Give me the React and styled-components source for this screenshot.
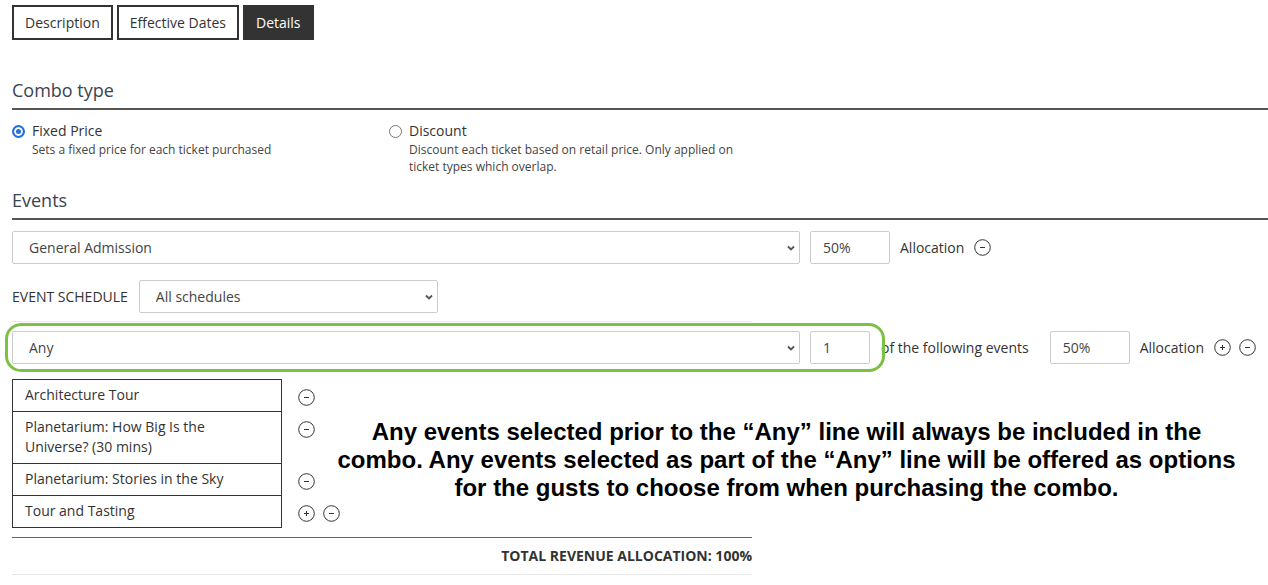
import React from 'react'
import styled, { createGlobalStyle } from 'styled-components'

const GlobalStyle = createGlobalStyle`
  body {
    margin: 0;
    background: #fff;
    color: #333;
    font-family: "Open Sans", "Noto Sans", sans-serif;
  }
`

const Page = styled.main`
  padding: 5px 0 0 12px;
`

const Tabs = styled.nav`
  display: flex;
  gap: 4px;
`

const Tab = styled.button`
  height: 35px;
  box-sizing: border-box;
  padding: 0 11px;
  border: 2px solid #333;
  border-radius: 0;
  background: ${(p) => (p.$active ? '#333' : '#fff')};
  color: ${(p) => (p.$active ? '#fff' : '#333')};
  font-family: inherit;
  font-size: 14px;
`

const SectionTitle = styled.h2`
  margin: ${(p) => p.$top}px 0 0;
  padding-bottom: 6px;
  border-bottom: 2px solid #555;
  font-size: 18px;
  line-height: 24px;
  font-weight: 400;
  color: #3b4350;
`

const RadioGroup = styled.div`
  display: grid;
  grid-template-columns: 377px 345px;
  margin-top: 11px;
`

const Option = styled.label`
  display: flex;
  gap: 7px;
  align-items: flex-start;
`

const Radio = styled.span`
  flex: 0 0 auto;
  box-sizing: border-box;
  width: 13px;
  height: 13px;
  margin-top: 4px;
  border-radius: 50%;
  border: ${(p) => (p.$checked ? '2px solid #1f6fe5' : '1px solid #777')};
  background: ${(p) => (p.$checked ? '#1f6fe5' : '#fff')};
  box-shadow: ${(p) => (p.$checked ? 'inset 0 0 0 2px #fff' : 'none')};
`

const OptionLabel = styled.div`
  font-size: 14px;
  line-height: 20px;
  color: #333;
`

const OptionDesc = styled.div`
  font-size: 12px;
  line-height: 17px;
  color: #444;
`

const Row = styled.div`
  display: flex;
  align-items: center;
  gap: 10px;
  margin-top: ${(p) => p.$top}px;
`

const SelectWrap = styled.div`
  position: relative;
  width: ${(p) => p.$width}px;
  flex: 0 0 auto;
`

const NativeSelect = styled.select`
  appearance: none;
  width: 100%;
  height: 33px;
  box-sizing: border-box;
  padding: 0 30px 0 16px;
  border: 1px solid #ccc;
  border-radius: 2px;
  background: #fff;
  color: #444;
  font-family: inherit;
  font-size: 14px;
`

const Chevron = styled.svg`
  position: absolute;
  right: 4px;
  top: 50%;
  transform: translateY(-50%);
  pointer-events: none;
`

const TextInput = styled.input`
  width: ${(p) => p.$width}px;
  height: 33px;
  box-sizing: border-box;
  padding: 0 12px;
  margin-left: ${(p) => p.$gap || 0}px;
  border: 1px solid #ccc;
  border-radius: 2px;
  color: #444;
  font-family: inherit;
  font-size: 14px;
  flex: 0 0 auto;
`

const Text = styled.span`
  font-size: 14px;
  color: #333;
  margin-left: ${(p) => p.$gap || 0}px;
`

const FieldLabel = styled.span`
  font-size: 14px;
  color: #333;
  text-transform: uppercase;
  margin-right: 1px;
`

const IconGroup = styled.span`
  display: inline-flex;
  gap: 8px;
  margin-left: ${(p) => p.$gap || 0}px;
`

const Divider = styled.hr`
  width: 740px;
  margin: 8px 0 0;
  border: 0;
  border-top: 1px solid #e8e8e8;
`

const Highlight = styled.div`
  position: relative;
  display: flex;
  gap: 10px;
  &::before {
    content: '';
    position: absolute;
    inset: -8px -15px -8px -7px;
    border: 3px solid #7cc144;
    border-radius: 16px;
    pointer-events: none;
  }
`

const ListArea = styled.div`
  display: flex;
  align-items: flex-start;
  margin-top: 15px;
`

const TableGroup = styled.div`
  flex: 0 0 auto;
`

const EventTable = styled.table`
  border-collapse: collapse;
`

const NameCell = styled.td`
  width: 228px;
  min-width: 228px;
  padding: 5px 28px 6px 12px;
  border: 1px solid #333;
  font-size: 14px;
  line-height: 20px;
  color: #333;
  vertical-align: top;
`

const ActionCell = styled.td`
  padding: 9px 0 0 16px;
  vertical-align: top;
  white-space: nowrap;
`

const Annotation = styled.p`
  flex: 0 0 920px;
  margin: 39px 0 0 -14px;
  font-family: "Liberation Sans", Arial, sans-serif;
  font-weight: 700;
  font-size: 24px;
  line-height: 28px;
  color: #000;
  text-align: center;
`

const TotalBar = styled.div`
  width: 740px;
  margin-top: 9px;
  padding: 8px 0 9px;
  border-top: 1px solid #666;
  border-bottom: 1px solid #e8e8e8;
  font-size: 14px;
  line-height: 19px;
  font-weight: 700;
  color: #333;
  text-align: right;
`

const CircleIcon = ({ plus }) => (
  <svg width="17" height="17" viewBox="0 0 17 17" fill="none" stroke="#333" strokeWidth="1">
    <circle cx="8.5" cy="8.5" r="7.8" />
    <line x1="6" y1="8.5" x2="11" y2="8.5" />
    {plus && <line x1="8.5" y1="6" x2="8.5" y2="11" />}
  </svg>
)

const Select = ({ width, value }) => (
  <SelectWrap $width={width}>
    <NativeSelect defaultValue={value}>
      <option>{value}</option>
    </NativeSelect>
    <Chevron width="10" height="10" viewBox="0 0 10 10" fill="none" stroke="#555" strokeWidth="1.8">
      <polyline points="2,3.5 5,6.5 8,3.5" />
    </Chevron>
  </SelectWrap>
)

const events = [
  { name: 'Architecture Tour' },
  { name: 'Planetarium: How Big Is the Universe? (30 mins)' },
  { name: 'Planetarium: Stories in the Sky' },
  { name: 'Tour and Tasting', last: true },
]

const App = () => {
  return (
    <Page>
      <GlobalStyle />
      <Tabs>
        <Tab>Description</Tab>
        <Tab>Effective Dates</Tab>
        <Tab $active>Details</Tab>
      </Tabs>

      <SectionTitle $top={38}>Combo type</SectionTitle>
      <RadioGroup>
        <Option>
          <Radio $checked />
          <div>
            <OptionLabel>Fixed Price</OptionLabel>
            <OptionDesc>Sets a fixed price for each ticket purchased</OptionDesc>
          </div>
        </Option>
        <Option>
          <Radio />
          <div>
            <OptionLabel>Discount</OptionLabel>
            <OptionDesc>
              Discount each ticket based on retail price. Only applied on ticket types which overlap.
            </OptionDesc>
          </div>
        </Option>
      </RadioGroup>

      <SectionTitle $top={13}>Events</SectionTitle>
      <Row $top={11}>
        <Select width={788} value="General Admission" />
        <TextInput $width={80} defaultValue="50%" />
        <Text>Allocation</Text>
        <IconGroup>
          <CircleIcon />
        </IconGroup>
      </Row>

      <Row $top={16}>
        <FieldLabel>Event Schedule</FieldLabel>
        <Select width={299} value="All schedules" />
      </Row>
      <Divider />

      <Row $top={9}>
        <Highlight>
          <Select width={788} value="Any" />
          <TextInput $width={60} defaultValue="1" />
        </Highlight>
        <Text $gap={1}>of the following events</Text>
        <TextInput $width={80} $gap={11} defaultValue="50%" />
        <Text>Allocation</Text>
        <IconGroup>
          <CircleIcon plus />
          <CircleIcon />
        </IconGroup>
      </Row>

      <ListArea>
        <TableGroup>
          <EventTable>
            <tbody>
              {events.map((ev) => (
                <tr key={ev.name}>
                  <NameCell>{ev.name}</NameCell>
                  <ActionCell>
                    <IconGroup>
                      {ev.last && <CircleIcon plus />}
                      <CircleIcon />
                    </IconGroup>
                  </ActionCell>
                </tr>
              ))}
            </tbody>
          </EventTable>
        </TableGroup>
        <Annotation>
          Any events selected prior to the “Any” line will always be included in the combo. Any events
          selected as part of the “Any” line will be offered as options for the gusts to choose from
          when purchasing the combo.
        </Annotation>
      </ListArea>

      <TotalBar>TOTAL REVENUE ALLOCATION: 100%</TotalBar>
    </Page>
  )
}

export default App
